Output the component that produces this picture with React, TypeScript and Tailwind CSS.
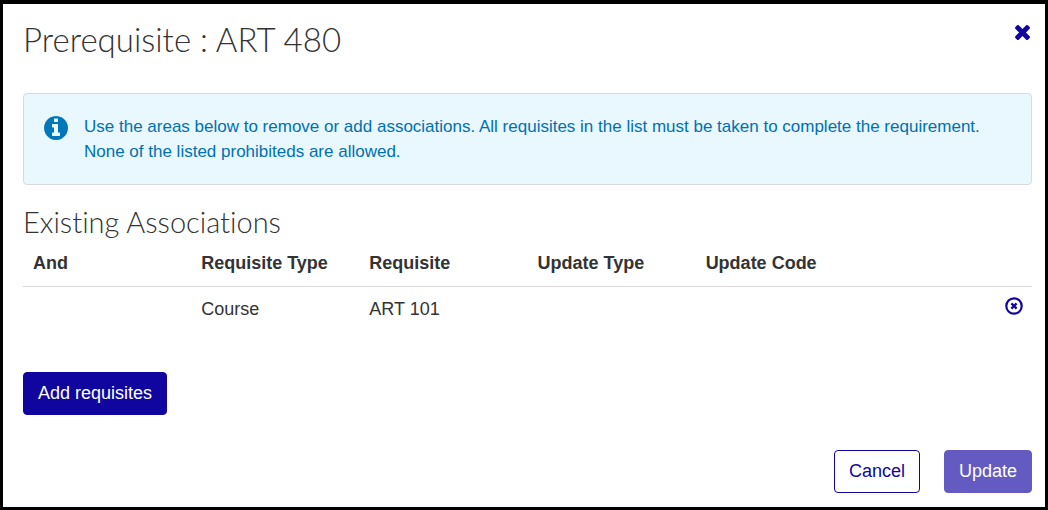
import { useState } from "react";

type Association = {
  id: number;
  and: string;
  requisiteType: string;
  requisite: string;
  updateType: string;
  updateCode: string;
};

const COLUMNS = [
  "And",
  "Requisite Type",
  "Requisite",
  "Update Type",
  "Update Code",
];

const INITIAL_ASSOCIATIONS: Association[] = [
  {
    id: 1,
    and: "",
    requisiteType: "Course",
    requisite: "ART 101",
    updateType: "",
    updateCode: "",
  },
];

function CloseIcon() {
  return (
    <svg
      className="size-[15px]"
      viewBox="302 366 1188 1188"
      fill="currentColor"
      aria-hidden="true"
    >
      <path d="M1490 1322q0 40-28 68l-136 136q-28 28-68 28t-68-28l-294-294-294 294q-28 28-68 28t-68-28l-136-136q-28-28-28-68t28-68l294-294-294-294q-28-28-28-68t28-68l136-136q28-28 68-28t68 28l294 294 294-294q28-28 68-28t68 28l136 136q28 28 28 68t-28 68l-294 294 294 294q28 28 28 68z" />
    </svg>
  );
}

function InfoIcon() {
  return (
    <svg
      className="mt-[2px] size-6 shrink-0 text-[#0077b9]"
      viewBox="128 128 1536 1536"
      fill="currentColor"
      aria-hidden="true"
    >
      <path d="M1152 1376v-160q0-14-9-23t-23-9h-96v-512q0-14-9-23t-23-9h-320q-14 0-23 9t-9 23v160q0 14 9 23t23 9h96v320h-96q-14 0-23 9t-9 23v160q0 14 9 23t23 9h448q14 0 23-9t9-23zm-128-896v-160q0-14-9-23t-23-9h-192q-14 0-23 9t-9 23v160q0 14 9 23t23 9h192q14 0 23-9t9-23zm640 416q0 209-103 385.5t-279.5 279.5-385.5 103-385.5-103-279.5-279.5-103-385.5 103-385.5 279.5-279.5 385.5-103 385.5 103 279.5 279.5 103 385.5z" />
    </svg>
  );
}

function RemoveIcon() {
  return (
    <svg
      className="size-[18px]"
      viewBox="0 0 18 18"
      fill="none"
      stroke="currentColor"
      aria-hidden="true"
    >
      <circle cx="9" cy="9" r="7.7" strokeWidth="2.2" />
      <path d="M6.4 6.4l5.2 5.2M11.6 6.4l-5.2 5.2" strokeWidth="2.3" />
    </svg>
  );
}

export default function App() {
  const [associations, setAssociations] = useState(INITIAL_ASSOCIATIONS);

  const handleRemove = (id: number) => {
    setAssociations((rows) => rows.filter((row) => row.id !== id));
  };

  return (
    <section
      role="dialog"
      aria-labelledby="dialog-title"
      className="min-h-screen border-[3px] border-t-4 border-black bg-white pr-[13px] pb-[14px] pl-5 font-['Liberation_Sans',Arial,sans-serif] text-lg leading-[25px] text-[#333333]"
    >
      <header className="flex items-start justify-between pt-[15px]">
        <h1
          id="dialog-title"
          className="font-['Lato',sans-serif] text-[33px] leading-10 font-light [font-variant-ligatures:none]"
        >
          Prerequisite : ART 480
        </h1>
        <button
          type="button"
          aria-label="Close"
          className="mt-[6px] mr-[2px] cursor-pointer text-[#10069f]"
        >
          <CloseIcon />
        </button>
      </header>

      <div className="mt-[34px] flex gap-4 rounded border border-[#d9dadb] bg-[#e9f7fe] p-5 text-[17px] text-[#0071b0]">
        <InfoIcon />
        <p>
          Use the areas below to remove or add associations. All requisites in
          the list must be taken to complete the requirement. None of the listed
          prohibiteds are allowed.
        </p>
      </div>

      <h2 className="mt-[19px] mb-px font-['Lato',sans-serif] text-[29px] leading-9 font-light [font-variant-ligatures:none]">
        Existing Associations
      </h2>

      <table className="w-full table-fixed text-left">
        <thead>
          <tr className="border-b border-[#d9d9d9]">
            {COLUMNS.map((column) => (
              <th key={column} className="px-[10px] py-[10px] font-bold">
                {column}
              </th>
            ))}
            <th aria-label="Actions" />
          </tr>
        </thead>
        <tbody>
          {associations.map((row) => (
            <tr key={row.id} className="align-top">
              <td className="px-[10px] py-[10px]">{row.and}</td>
              <td className="px-[10px] py-[10px]">{row.requisiteType}</td>
              <td className="px-[10px] py-[10px]">{row.requisite}</td>
              <td className="px-[10px] py-[10px]">{row.updateType}</td>
              <td className="px-[10px] py-[10px]">{row.updateCode}</td>
              <td className="px-[9px] py-[10px]">
                <button
                  type="button"
                  aria-label={`Remove ${row.requisite}`}
                  className="ml-auto block cursor-pointer text-[#10069f]"
                  onClick={() => handleRemove(row.id)}
                >
                  <RemoveIcon />
                </button>
              </td>
            </tr>
          ))}
        </tbody>
      </table>

      <button
        type="button"
        className="mt-10 cursor-pointer rounded border border-[#10069f] bg-[#10069f] px-[14px] py-2 text-white"
      >
        Add requisites
      </button>

      <footer className="mt-[35px] flex justify-end gap-6">
        <button
          type="button"
          className="cursor-pointer rounded border border-[#10069f] bg-white px-[14px] py-2 text-[#10069f]"
        >
          Cancel
        </button>
        <button
          type="button"
          className="cursor-pointer rounded border border-[#635bc1] bg-[#635bc1] px-[14px] py-2 text-white"
        >
          Update
        </button>
      </footer>
    </section>
  );
}
